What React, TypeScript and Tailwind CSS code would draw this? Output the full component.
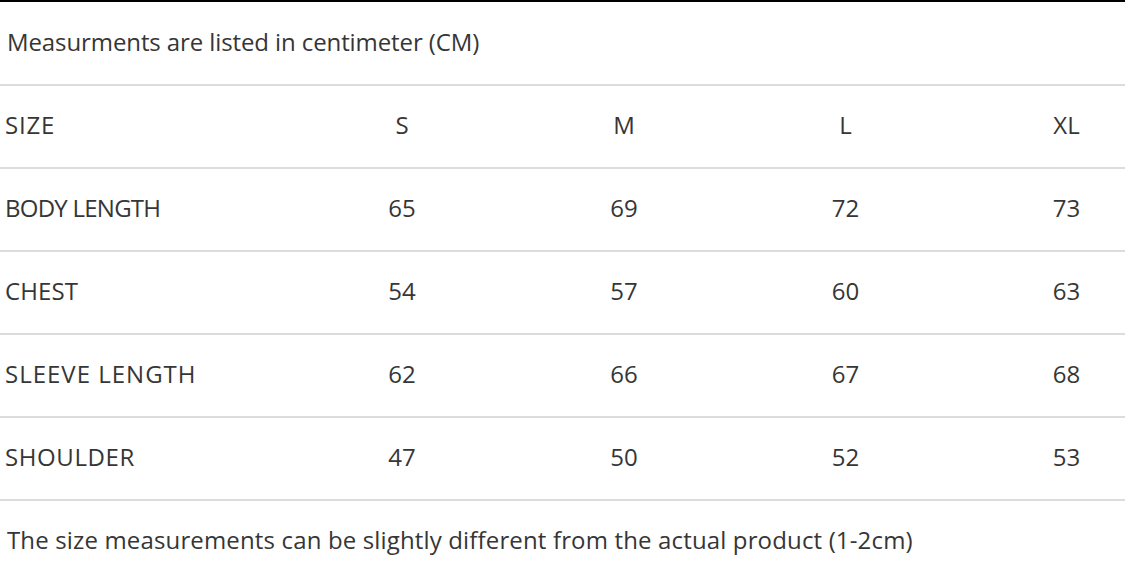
const sizes = ["S", "M", "L", "XL"];

const rows = [
  { label: "BODY LENGTH", track: "tracking-[-0.75px]", values: [65, 69, 72, 73] },
  { label: "CHEST", track: "tracking-[0.1px]", values: [54, 57, 60, 63] },
  { label: "SLEEVE LENGTH", track: "tracking-[1px]", values: [62, 66, 67, 68] },
  { label: "SHOULDER", track: "tracking-[0.6px]", values: [47, 50, 52, 53] },
];

const font = { fontFamily: '"Open Sans", "Noto Sans CJK KR", sans-serif' };

export default function App() {
  return (
    <div
      className="w-[1125px] h-[579px] bg-white text-[#363636] overflow-hidden"
      style={font}
    >
      <div className="h-[86px] border-t-2 border-b-2 border-t-black border-b-[#dcdcdc] flex items-center pl-[7px] pb-[2px] text-[24px] tracking-[-0.1px]">
        Measurments are listed in centimeter (CM)
      </div>

      <div className="h-[83px] border-b-2 border-[#dcdcdc] grid grid-cols-[291px_222px_222px_221px_221px] items-center pb-[3px] text-[24px] w-[1177px]">
        <div className="pl-[5px] tracking-[0.8px]">SIZE</div>
        {sizes.map((s) => (
          <div key={s} className="text-center">
            {s}
          </div>
        ))}
      </div>

      {rows.map((row) => (
        <div
          key={row.label}
          className="h-[83px] border-b-2 border-[#dcdcdc] grid grid-cols-[291px_222px_222px_221px_221px] items-center pb-[3px] text-[24px] w-[1177px]"
        >
          <div className={`pl-[5px] ${row.track}`}>{row.label}</div>
          {row.values.map((v, i) => (
            <div key={i} className="text-center">
              {v}
            </div>
          ))}
        </div>
      ))}

      <div className="h-[80px] flex items-center pl-[7px] pb-[3px] text-[24px] tracking-[0.15px]">
        The size measurements can be slightly different from the actual product (1-2cm)
      </div>
    </div>
  );
}
